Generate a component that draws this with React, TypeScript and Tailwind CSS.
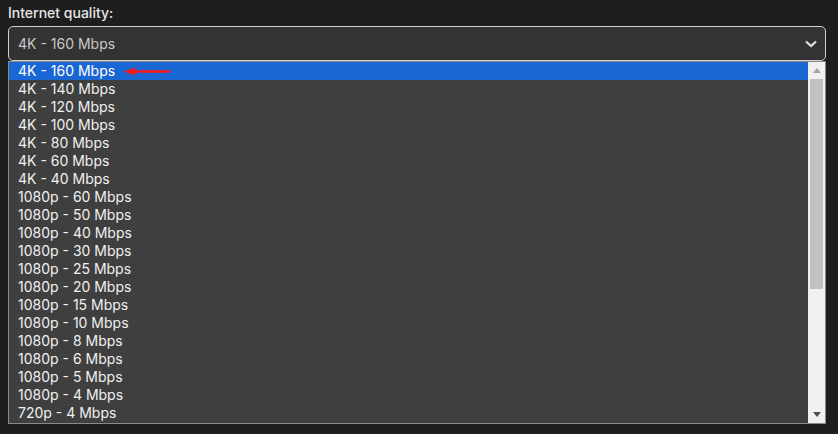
import React from "react";

const options = [
  "4K - 160 Mbps",
  "4K - 140 Mbps",
  "4K - 120 Mbps",
  "4K - 100 Mbps",
  "4K - 80 Mbps",
  "4K - 60 Mbps",
  "4K - 40 Mbps",
  "1080p - 60 Mbps",
  "1080p - 50 Mbps",
  "1080p - 40 Mbps",
  "1080p - 30 Mbps",
  "1080p - 25 Mbps",
  "1080p - 20 Mbps",
  "1080p - 15 Mbps",
  "1080p - 10 Mbps",
  "1080p - 8 Mbps",
  "1080p - 6 Mbps",
  "1080p - 5 Mbps",
  "1080p - 4 Mbps",
  "720p - 4 Mbps",
];

const App = () => {
  return (
    <div className="w-[838px] h-[434px] bg-[#1e1e1e] pl-2 pr-3 pt-[4px] font-['Inter',sans-serif] overflow-hidden">
      {/* Label */}
      <div className="text-[14px] leading-[18px] text-[#e6e6e6] h-[22px] font-medium">Internet quality:</div>

      {/* Select */}
      <div className="h-[35px] flex items-center justify-between rounded-[5px] border border-[#d0d0d0] bg-[#333333] pl-[9px] pr-[7px]">
        <span className="text-[14px] text-[#c8c8c8]">4K - 160 Mbps</span>
        <svg width="14" height="10" viewBox="0 0 14 10" className="text-[#e0e0e0]">
          <path d="M2 2.5 L7 7 L12 2.5" fill="none" stroke="currentColor" strokeWidth="2.2" />
        </svg>
      </div>

      {/* Dropdown list */}
      <div className="flex border border-[#8a8a8a] bg-[#3f3f3f] h-[363px]">
        <ul className="flex-1">
          {options.map((opt, i) => (
            <li
              key={opt}
              className={`h-[18px] pl-[9px] text-[14px] leading-[18px] flex items-center ${
                i === 0 ? "bg-[#1a66d2] text-white" : "text-[#f0f0f0]"
              }`}
            >
              {opt}
              {i === 0 && (
                <svg width="48" height="9" viewBox="0 0 48 9" className="ml-[9px]">
                  <path d="M0 4.5 L11 0.5 L11 3.3 L46 3.3 L46 5.7 L11 5.7 L11 8.5 Z" fill="#ff1414" />
                </svg>
              )}
            </li>
          ))}
        </ul>

        {/* Scrollbar */}
        <div className="w-[17px] bg-[#f0f0f0] flex flex-col items-center">
          <div className="h-[17px] flex items-center justify-center">
            <svg width="8" height="5" viewBox="0 0 8 5">
              <path d="M0 5 L4 0 L8 5 Z" fill="#a3a3a3" />
            </svg>
          </div>
          <div className="w-[13px] h-[210px] bg-[#c1c1c1]" />
          <div className="flex-1" />
          <div className="h-[17px] flex items-center justify-center">
            <svg width="8" height="5" viewBox="0 0 8 5">
              <path d="M0 0 L8 0 L4 5 Z" fill="#505050" />
            </svg>
          </div>
        </div>
      </div>
    </div>
  );
};

export default App;
